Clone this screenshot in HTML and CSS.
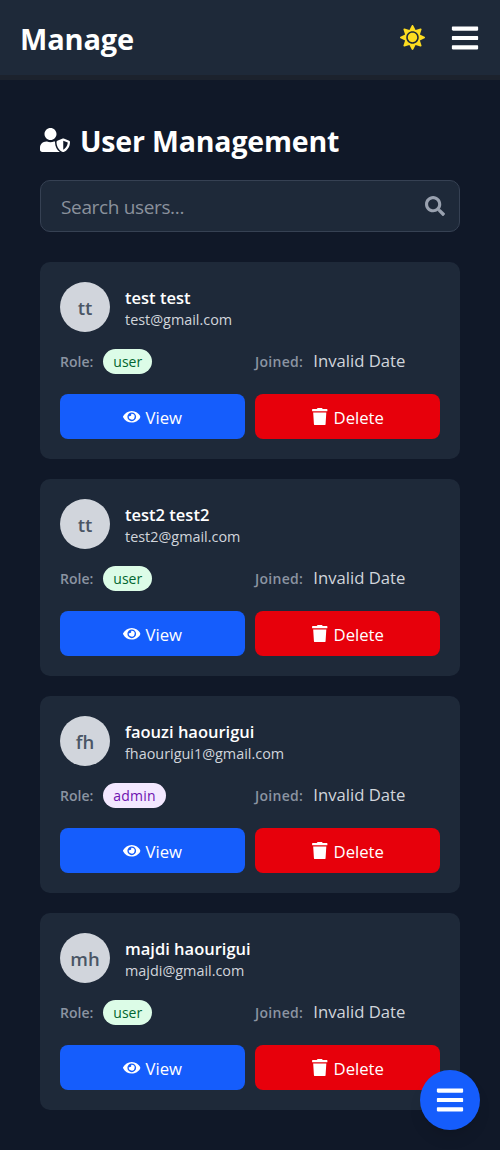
FILE: index.html
```html
<!DOCTYPE html>
<html lang="en">
<head>
<meta charset="utf-8">
<title>User Management</title>
<link rel="stylesheet" href="styles.css">
</head>
<body>
<svg class="sprite" aria-hidden="true">
  <symbol id="bars" viewBox="0 0 448 512"><path d="M16 132h416c8.8 0 16-7.2 16-16V76c0-8.8-7.2-16-16-16H16C7.2 60 0 67.2 0 76v40c0 8.800 7.200 16 16 16zm0 160h416c8.800 0 16-7.200 16-16v-40c0-8.800-7.200-16-16-16H16c-8.800 0-16 7.200-16 16v40c0 8.800 7.200 16 16 16zm0 160h416c8.800 0 16-7.200 16-16v-40c0-8.800-7.200-16-16-16H16c-8.800 0-16 7.200-16 16v40c0 8.800 7.200 16 16 16z"/></symbol>
  <symbol id="sun" viewBox="0 0 512 512"><path d="M256 160c-52.9 0-96 43.1-96 96s43.100 96 96 96 96-43.100 96-96-43.100-96-96-96zm246.400 80.500l-94.700-47.300 33.500-100.400c4.500-13.600-8.400-26.500-21.900-21.900l-100.400 33.500-47.400-94.800c-6.400-12.800-24.600-12.800-31 0l-47.300 94.700L92.700 70.800c-13.600-4.500-26.500 8.400-21.900 21.900l33.500 100.400-94.700 47.400c-12.800 6.400-12.800 24.600 0 31l94.700 47.300-33.500 100.500c-4.500 13.600 8.400 26.500 21.900 21.900l100.400-33.500 47.300 94.700c6.400 12.800 24.600 12.800 31 0l47.300-94.700 100.400 33.500c13.600 4.500 26.500-8.400 21.900-21.900l-33.500-100.400 94.700-47.300c13-6.500 13-24.700.2-31.100zm-155.900 106c-49.900 49.900-131.100 49.900-181 0-49.900-49.900-49.900-131.100 0-181 49.900-49.900 131.100-49.900 181 0 49.900 49.900 49.900 131.100 0 181z"/></symbol>
  <symbol id="user-shield" viewBox="0 0 640 512"><path d="M622.3 271.1l-115.200-45c-4.100-1.600-12.600-3.700-22.200 0l-115.200 45c-10.700 4.200-17.700 14-17.700 24.900 0 111.600 68.700 188.800 132.900 213.900 9.600 3.700 18 1.600 22.200 0C558.400 489.900 640 420.500 640 296c0-10.900-7-20.700-17.700-24.900zM496 462.400V273.300l95.500 37.300c-5.600 87.100-60.900 135.400-95.500 151.800zM224 256c70.700 0 128-57.300 128-128S294.700 0 224 0 96 57.300 96 128s57.300 128 128 128zm96 40c0-2.500.8-4.800 1.100-7.200-2.500-.1-4.900-.8-7.500-.8h-16.700c-22.200 10.200-46.900 16-72.900 16s-50.600-5.800-72.900-16h-16.700C60.200 288 0 348.200 0 422.400V464c0 26.500 21.500 48 48 48h352c6.800 0 13.300-1.500 19.200-4-54-42.900-99.200-116.700-99.200-212z"/></symbol>
  <symbol id="search" viewBox="0 0 512 512"><path d="M505 442.700L405.300 343c-4.500-4.500-10.600-7-17-7H372c27.600-35.300 44-79.700 44-128C416 93.100 322.900 0 208 0S0 93.100 0 208s93.100 208 208 208c48.300 0 92.700-16.400 128-44v16.300c0 6.400 2.500 12.500 7 17l99.700 99.700c9.400 9.400 24.600 9.400 33.900 0l28.300-28.300c9.400-9.400 9.400-24.600.1-34zM208 336c-70.700 0-128-57.200-128-128 0-70.700 57.200-128 128-128 70.700 0 128 57.200 128 128 0 70.700-57.200 128-128 128z"/></symbol>
  <symbol id="eye" viewBox="0 0 576 512"><path d="M572.520 241.400C518.290 135.590 410.930 64 288 64S57.680 135.640 3.480 241.410a32.350 32.350 0 0 0 0 29.190C57.710 376.410 165.070 448 288 448s230.320-71.640 284.520-177.410a32.350 32.350 0 0 0 0-29.190zM288 400a144 144 0 1 1 144-144 143.930 143.930 0 0 1-144 144zm0-240a95.310 95.310 0 0 0-25.310 3.790 47.850 47.850 0 0 1-66.900 66.900A95.780 95.780 0 1 0 288 160z"/></symbol>
  <symbol id="trash" viewBox="0 0 448 512"><path d="M432 32H312l-9.400-18.700A24 24 0 0 0 281.100 0H166.800a23.720 23.720 0 0 0-21.400 13.300L136 32H16A16 16 0 0 0 0 48v32a16 16 0 0 0 16 16h416a16 16 0 0 0 16-16V48a16 16 0 0 0-16-16zM53.200 467a48 48 0 0 0 47.900 45h245.800a48 48 0 0 0 47.900-45L416 128H32z"/></symbol>
</svg>

<header class="topbar">
  <div class="brand">Manage</div>
  <div class="topbar-actions">
    <svg class="icon-sun"><use href="#sun"/></svg>
    <svg class="icon-bars"><use href="#bars"/></svg>
  </div>
</header>

<main class="content">
  <h1 class="title"><svg class="icon-title"><use href="#user-shield"/></svg><span>User Management</span></h1>
  <div class="search">
    <span class="search-text">Search users...</span>
    <svg class="icon-search"><use href="#search"/></svg>
  </div>

  <section class="cards">
    <article class="card">
      <div class="person">
        <div class="avatar">tt</div>
        <div class="identity"><div class="name">test test</div><div class="email">test@gmail.com</div></div>
      </div>
      <div class="meta">
        <div class="field"><span class="label">Role:</span><span class="pill user">user</span></div>
        <div class="field"><span class="label joined">Joined:</span><span class="date">Invalid Date</span></div>
      </div>
      <div class="actions">
        <div class="btn view"><svg class="icon-btn"><use href="#eye"/></svg><span>View</span></div>
        <div class="btn delete"><svg class="icon-btn"><use href="#trash"/></svg><span>Delete</span></div>
      </div>
    </article>

    <article class="card">
      <div class="person">
        <div class="avatar">tt</div>
        <div class="identity"><div class="name">test2 test2</div><div class="email">test2@gmail.com</div></div>
      </div>
      <div class="meta">
        <div class="field"><span class="label">Role:</span><span class="pill user">user</span></div>
        <div class="field"><span class="label joined">Joined:</span><span class="date">Invalid Date</span></div>
      </div>
      <div class="actions">
        <div class="btn view"><svg class="icon-btn"><use href="#eye"/></svg><span>View</span></div>
        <div class="btn delete"><svg class="icon-btn"><use href="#trash"/></svg><span>Delete</span></div>
      </div>
    </article>

    <article class="card">
      <div class="person">
        <div class="avatar">fh</div>
        <div class="identity"><div class="name">faouzi haourigui</div><div class="email">fhaourigui1@gmail.com</div></div>
      </div>
      <div class="meta">
        <div class="field"><span class="label">Role:</span><span class="pill admin">admin</span></div>
        <div class="field"><span class="label joined">Joined:</span><span class="date">Invalid Date</span></div>
      </div>
      <div class="actions">
        <div class="btn view"><svg class="icon-btn"><use href="#eye"/></svg><span>View</span></div>
        <div class="btn delete"><svg class="icon-btn"><use href="#trash"/></svg><span>Delete</span></div>
      </div>
    </article>

    <article class="card">
      <div class="person">
        <div class="avatar">mh</div>
        <div class="identity"><div class="name">majdi haourigui</div><div class="email">majdi@gmail.com</div></div>
      </div>
      <div class="meta">
        <div class="field"><span class="label">Role:</span><span class="pill user">user</span></div>
        <div class="field"><span class="label joined">Joined:</span><span class="date">Invalid Date</span></div>
      </div>
      <div class="actions">
        <div class="btn view"><svg class="icon-btn"><use href="#eye"/></svg><span>View</span></div>
        <div class="btn delete"><svg class="icon-btn"><use href="#trash"/></svg><span>Delete</span></div>
      </div>
    </article>
  </section>
</main>

<div class="fab"><svg class="icon-bars"><use href="#bars"/></svg></div>
</body>
</html>
```
FILE: styles.css
```css
* { box-sizing: border-box; }
body {
  margin: 0;
  height: 1150px;
  overflow: hidden;
  background: #101828;
  color: #fff;
  font-family: "Open Sans", "Noto Sans", sans-serif;
  white-space: nowrap;
}
svg { display: block; fill: currentColor; flex: none; }
.sprite { display: none; }

.topbar {
  height: 80px;
  padding: 0 20px;
  display: flex;
  justify-content: space-between;
  background: #1e2939;
  border-bottom: 5px solid #1c222d;
}
.brand { font-size: 29px; font-weight: 700; line-height: 78px; letter-spacing: -0.15px; }
.topbar-actions { display: flex; align-items: center; gap: 25px; }
.icon-sun { width: 25px; height: 25px; color: #fddc20; }
.icon-bars { width: 30px; height: 30px; }

.content { padding: 40px 40px 0; }
.title {
  margin: 0;
  height: 45px;
  display: flex;
  align-items: center;
  gap: 10px;
  font-size: 28.5px;
  line-height: 43px;
  font-weight: 700;
  letter-spacing: -0.17px;
}
.title span { padding-bottom: 2px; }
.icon-title { width: 30px; height: 24px; margin-top: -5px; }

.search {
  height: 52px;
  margin-top: 15px;
  padding: 0 14px 0 20px;
  display: flex;
  align-items: center;
  justify-content: space-between;
  background: #1e2939;
  border: 1px solid #364153;
  border-radius: 10px;
  font-size: 19px;
  letter-spacing: -0.35px;
  color: #8a919c;
}
.search-text { padding-top: 2px; }
.icon-search { width: 20px; height: 20px; color: #99a1af; }

.cards { margin-top: 30px; display: grid; gap: 20px; }
.card { height: 197px; padding: 20px; border-radius: 10px; background: #1e2939; }
.person { display: flex; gap: 15px; height: 50px; }
.avatar {
  width: 50px;
  height: 50px;
  border-radius: 50%;
  background: #d1d5dc;
  color: #4a5565;
  font-size: 18.5px;
  font-weight: 600;
  line-height: 51px;
  text-align: center;
}
.identity { padding-top: 4px; }
.name { font-size: 16.5px; line-height: 24px; font-weight: 600; }
.email { font-size: 14.4px; line-height: 20px; color: #d1d5dc; }
.meta { margin-top: 17px; height: 25px; display: grid; grid-template-columns: 1fr 1fr; gap: 10px; }
.field { display: flex; align-items: center; gap: 10px; }
.label { font-size: 14px; font-weight: 600; color: #8b94a2; }
.joined { letter-spacing: 0.3px; }
.pill { height: 25px; padding: 0 10px; border-radius: 13px; font-size: 14px; line-height: 25px; font-weight: 500; }
.user { background: #dcfce7; color: #016630; }
.admin { background: #f3e8ff; color: #6e11b0; letter-spacing: 0.2px; }
.date { font-size: 16.7px; line-height: 22px; padding-bottom: 2px; color: #d1d5dc; }
.actions { margin-top: 20px; display: grid; grid-template-columns: 1fr 1fr; gap: 10px; }
.btn {
  height: 45px;
  display: flex;
  align-items: center;
  justify-content: center;
  gap: 5px;
  border-radius: 8px;
  font-size: 16.7px;
  line-height: 24px;
}
.btn span { padding-top: 2px; }
.icon-btn { width: 17.5px; height: 17.5px; }
.view { background: #155dfc; }
.delete { background: #e7000b; }

.fab {
  position: fixed;
  right: 20px;
  bottom: 20px;
  width: 60px;
  height: 60px;
  display: flex;
  align-items: center;
  justify-content: center;
  border-radius: 50%;
  background: #155dfc;
  box-shadow: 0 10px 15px -3px rgba(0, 0, 0, .1), 0 4px 6px -4px rgba(0, 0, 0, .1);
}
```
